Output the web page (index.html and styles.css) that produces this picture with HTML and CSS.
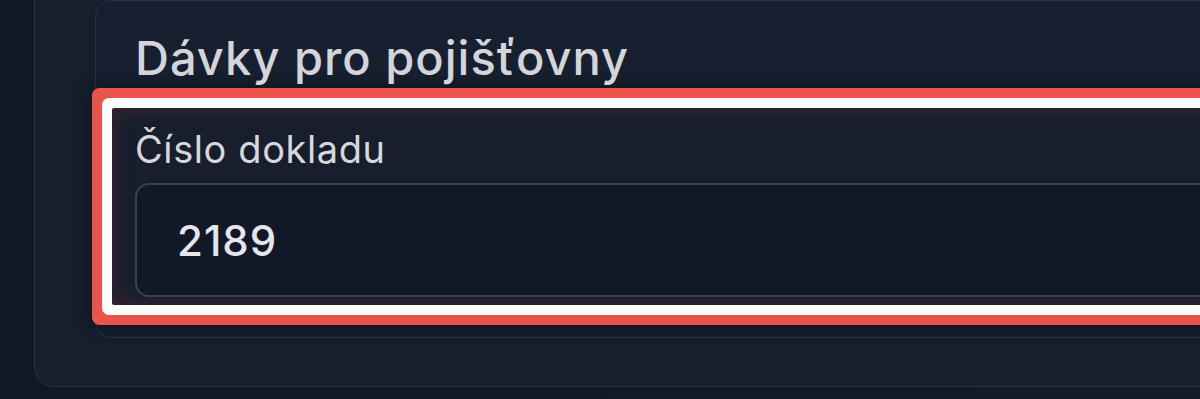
FILE: index.html
```html
<!DOCTYPE html>
<html lang="cs">
<head>
    <meta charset="UTF-8">
    <meta name="viewport" content="width=device-width, initial-scale=1.0">
    <title>Dávky pro pojišťovny</title>
    <link rel="stylesheet" href="styles.css">
</head>
<body>
    <div class="page">
        <div class="panel">
            <div class="card">
                <h2 class="title">Dávky pro pojišťovny</h2>
                <div class="field on">
                    <label class="label" for="doklad">Číslo dokladu</label>
                    <input class="input" id="doklad" type="text" value="2189">
                </div>
            </div>
        </div>
    </div>
</body>
</html>
```

FILE: styles.css
```css
* {
    margin: 0;
    padding: 0;
    box-sizing: border-box;
}
html, body {
    height: 100%;
}
body {
    background: linear-gradient(90deg, #111723 0%, #141b28 100%);
    font-family: Inter, "Noto Sans", sans-serif;
    overflow: hidden;
}
.page {
    padding-left: 34px;
    width: 1400px;
}
.panel {
    margin-top: -40px;
    border: 1px solid #2a3240;
    border-radius: 20px;
    background: #171f2d;
    padding: 0 0 48px 60px;
}
.card {
    margin-top: 39px;
    border: 1px solid #2b3341;
    border-radius: 16px;
    background: #172030;
    padding: 33px 0 32px 16px;
}
.title {
    margin-left: 23px;
    font-size: 47px;
    line-height: 47px;
    font-weight: 500;
    color: #d3d5d9;
    letter-spacing: 1px;
}
.field {
    margin-top: 27px;
    padding: 22px 0 8px 23px;
    border-radius: 2px;
    background: #171e2c;
}
.field.on {
    box-shadow: inset 0 0 22px rgba(200, 70, 70, 0.22),
                0 0 0 10px #fdfdfd,
                0 0 0 20px #e9534a,
                0 0 14px 22px rgba(5, 8, 14, 0.5);
}
.label {
    display: block;
    font-size: 38px;
    line-height: 38px;
    letter-spacing: 0.6px;
    color: #d6d8dc;
}
.input {
    display: block;
    margin-top: 15px;
    width: 100%;
    height: 114px;
    border: 2px solid #3a4150;
    border-radius: 14px;
    background: #111827;
    padding-left: 40px;
    font-family: inherit;
    font-size: 42px;
    font-weight: 500;
    letter-spacing: 1px;
    color: #e4e6ea;
    outline: none;
}
```
